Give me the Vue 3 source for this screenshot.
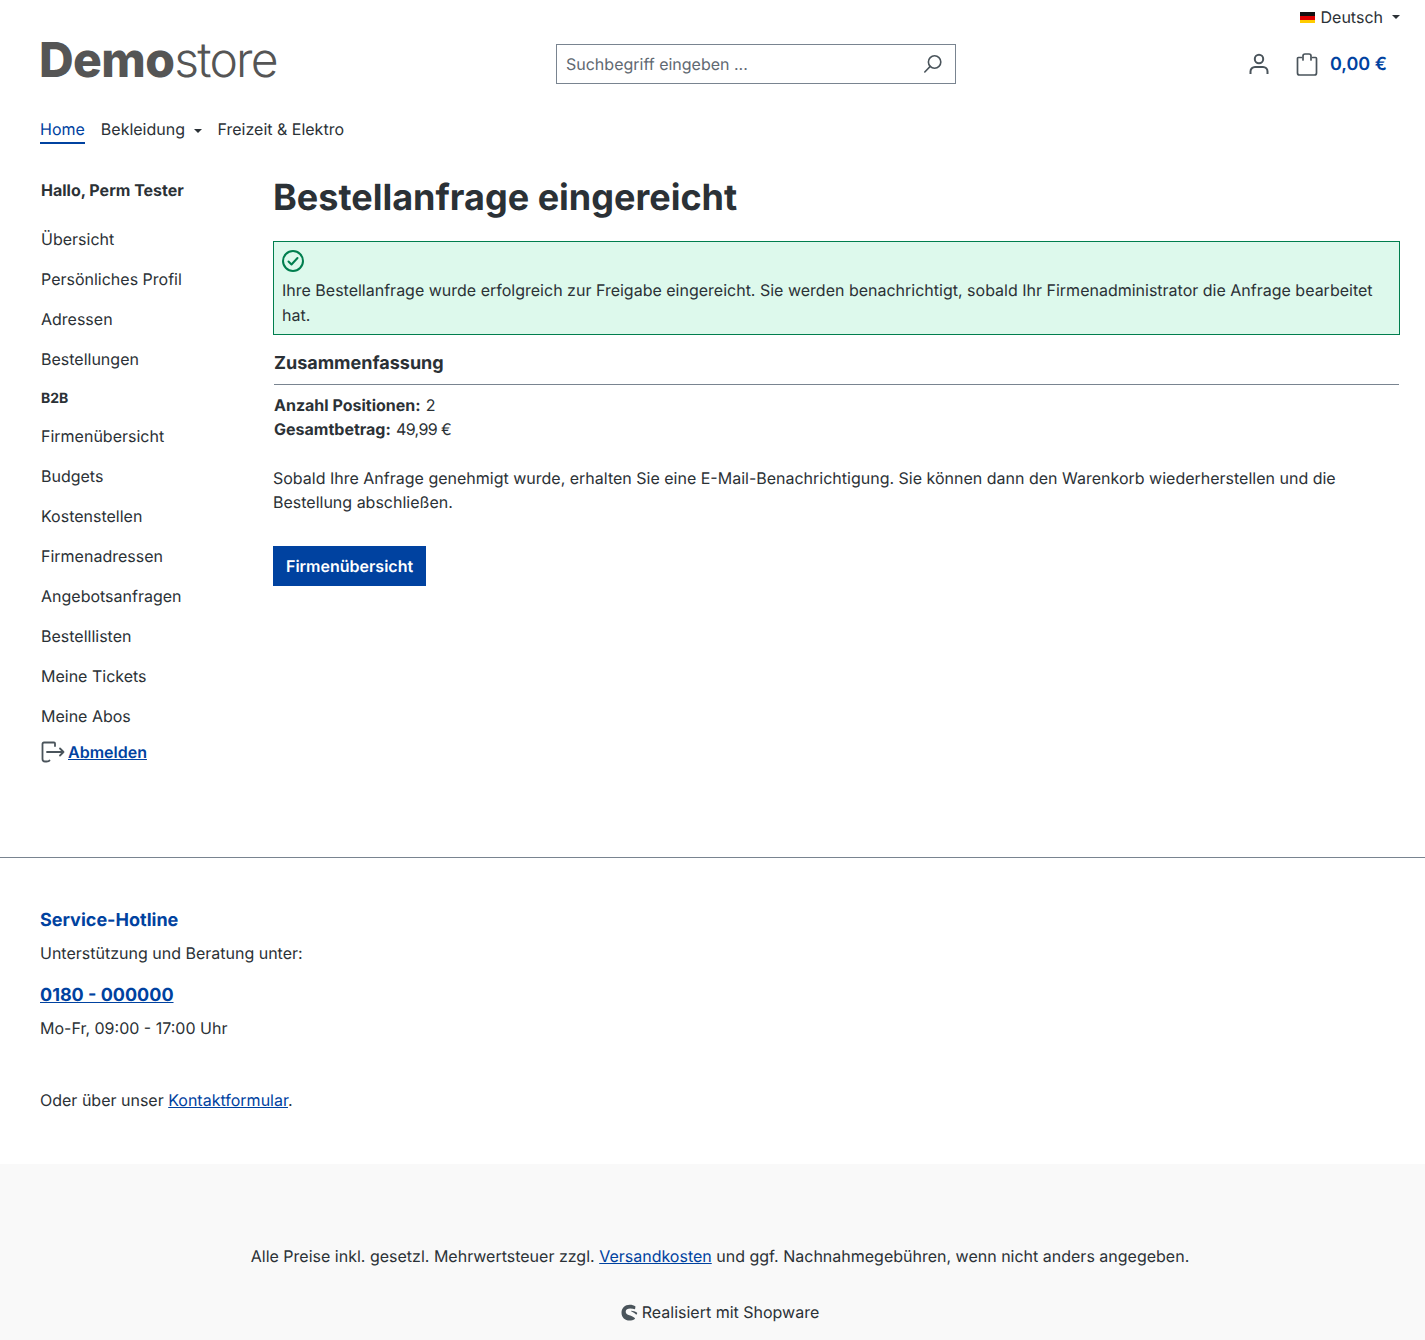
<template>
  <div class="page">
    <div class="topbar">
      <svg class="flag" width="15" height="11" viewBox="0 0 15 11">
        <rect width="15" height="4" y="0" fill="#111" />
        <rect width="15" height="4" y="4" fill="#d00" />
        <rect width="15" height="3" y="8" fill="#fc0" />
      </svg>
      <span class="lang">Deutsch</span>
      <span class="caret lang-caret"></span>
    </div>

    <header class="header">
      <div class="logo"><b>Demo</b><span>store</span></div>
      <div class="search">
        <span class="search-text">Suchbegriff eingeben ...</span>
        <svg width="20" height="20" viewBox="0 0 20 20" fill="none" stroke="#4a545b" stroke-width="1.6" stroke-linecap="round">
          <circle cx="11.6" cy="8" r="6.2" />
          <path d="M7.2 12.4 1.8 18" />
        </svg>
      </div>
      <div class="actions">
        <svg width="20" height="22" viewBox="0 0 20 22" fill="none" stroke="#4a545b" stroke-width="2">
          <circle cx="10" cy="6" r="4.2" />
          <path d="M1.5 21v-2.5A4.5 4.5 0 0 1 6 14h8a4.5 4.5 0 0 1 4.500 4.500V21" />
        </svg>
        <svg class="bag" width="22" height="23" viewBox="0 0 22 23" fill="none" stroke="#4a545b" stroke-width="1.7" stroke-linecap="round">
          <path d="M5.500 4.500H2.400Q1.500 4.500 1.500 5.500V20Q1.500 22 3.500 22H18.500Q20.500 22 20.500 20V5.500Q20.500 4.500 19.600 4.500H16.500" />
          <path d="M7 7V3Q7 1 9 1H13Q15 1 15 3V7" />
        </svg>
        <span class="cart-total">0,00 €</span>
      </div>
    </header>

    <nav class="mainnav">
      <a class="nav-link active">Home</a>
      <a class="nav-link">Bekleidung <span class="caret nav-caret"></span></a>
      <a class="nav-link">Freizeit &amp; Elektro</a>
    </nav>

    <main class="content">
      <aside class="sidebar">
        <div class="hello">Hallo, Perm Tester</div>
        <ul class="menu">
          <li v-for="item in accountLinks" :key="item">{{ item }}</li>
        </ul>
        <div class="b2b">B2B</div>
        <ul class="menu menu-b2b">
          <li v-for="item in b2bLinks" :key="item">{{ item }}</li>
        </ul>
        <div class="logout">
          <svg width="24" height="22" viewBox="0 0 24 22" fill="none" stroke="#4a545b" stroke-width="1.8" stroke-linecap="round" stroke-linejoin="round">
            <path d="M14 5V2.500Q14 1.500 13 1.500H3Q1.500 1.500 1.500 3V18Q1.500 20.500 4 20.500H5.500Q8 20.500 8.500 19.500" />
            <path d="M6 11H22.500M19 7.500 22.500 11 19 14.500" />
          </svg>
          <a>Abmelden</a>
        </div>
      </aside>

      <section class="main">
        <h1>Bestellanfrage eingereicht</h1>
        <div class="alert">
          <svg width="24" height="24" viewBox="0 0 24 24" fill="none" stroke="#007e4e" stroke-width="2" stroke-linecap="round" stroke-linejoin="round">
            <circle cx="12" cy="12" r="10" />
            <path d="m7.500 12.500 3 3 6-6.500" />
          </svg>
          <p>Ihre Bestellanfrage wurde erfolgreich zur Freigabe eingereicht. Sie werden benachrichtigt, sobald Ihr Firmenadministrator die Anfrage bearbeitet hat.</p>
        </div>
        <div class="summary">
          <h2>Zusammenfassung</h2>
          <div class="summary-row"><strong>Anzahl Positionen:</strong> 2</div>
          <div class="summary-row"><strong>Gesamtbetrag:</strong> <span class="amount">49,99 €</span></div>
        </div>
        <p class="note">Sobald Ihre Anfrage genehmigt wurde, erhalten Sie eine E-Mail-Benachrichtigung. Sie können dann den Warenkorb wiederherstellen und die Bestellung abschließen.</p>
        <a class="btn">Firmenübersicht</a>
      </section>
    </main>

    <footer>
      <div class="service">
        <div class="service-title">Service-Hotline</div>
        <p class="service-sub">Unterstützung und Beratung unter:</p>
        <a class="phone">0180 - 000000</a>
        <p class="hours">Mo-Fr, 09:00 - 17:00 Uhr</p>
        <p class="contact">Oder über unser <a>Kontaktformular</a>.</p>
      </div>
      <div class="bottom">
        <p class="vat">Alle Preise inkl. gesetzl. Mehrwertsteuer zzgl. <a>Versandkosten</a> und ggf. Nachnahmegebühren, wenn nicht anders angegeben.</p>
        <div class="powered">
          <svg width="17" height="17" viewBox="0 0 17 17">
            <path fill="#4a545b" d="M14.500 2.600C13 1.300 11 .7 8.800.7 3.900.7.500 4 .500 8.700c0 4.600 3.500 7.900 8 7.900 1.900 0 3.800-.6 5.300-1.700.3-.2.200-.6 0-.8-1.200-1.500-3.300-2.200-5.400-2.900-2.100-.7-3.700-1.500-3.700-3.500 0-2 2-3.200 4.600-3.200 1.600 0 3.200.3 4.600.8.200 0 .4-.3.200-.5zM15.800 8.400c-1.700-1-3.600-1.500-5.500-1.600-.3 0-.4.300-.2.500 1.900.9 3.700 1.800 4.900 3.200.2.200.5.200.6 0 .5-.8.700-1.300.6-1.500 0-.3-.2-.5-.4-.6z" />
          </svg>
          <span>Realisiert mit Shopware</span>
        </div>
      </div>
    </footer>
  </div>
</template>

<script setup>
const accountLinks = ['Übersicht', 'Persönliches Profil', 'Adressen', 'Bestellungen']
const b2bLinks = [
  'Firmenübersicht',
  'Budgets',
  'Kostenstellen',
  'Firmenadressen',
  'Angebotsanfragen',
  'Bestelllisten',
  'Meine Tickets',
  'Meine Abos'
]
</script>

<style>
body {
  margin: 0;
}
</style>

<style scoped>
.page {
  font-family: Inter, "Liberation Sans", sans-serif;
  font-size: 16px;
  line-height: 24px;
  color: #2b3136;
  background: #fff;
  text-rendering: geometricPrecision;
}

a {
  color: #0042a0;
  text-decoration: underline;
}

p {
  margin: 0;
}

.caret {
  display: inline-block;
  border-top: 4px solid #2b3136;
  border-left: 4px solid transparent;
  border-right: 4px solid transparent;
}

.topbar {
  display: flex;
  align-items: center;
  justify-content: flex-end;
  height: 34px;
  padding: 0 25px 0 0;
}

.flag {
  margin-right: 6px;
}

.lang-caret {
  margin-left: 9px;
}

.header {
  display: flex;
  align-items: center;
  height: 60px;
  padding: 0 38px 0 40px;
}

.logo {
  width: 516px;
  font-size: 48px;
  line-height: 54px;
  color: #555;
  letter-spacing: -0.6px;
  margin: -8px 0 0 -1px;
}

.logo b {
  font-weight: 800;
}

.logo span {
  font-weight: 300;
  letter-spacing: -1.8px;
}

.search {
  display: flex;
  align-items: center;
  justify-content: space-between;
  box-sizing: border-box;
  width: 400px;
  height: 40px;
  padding: 0 12px 0 9px;
  margin-left: 1px;
  border: 1px solid #798490;
}

.search-text {
  color: #5f6972;
}

.actions {
  display: flex;
  align-items: center;
  margin-left: auto;
}

.bag {
  margin-left: 27px;
}

.cart-total {
  margin: 1px 0 0 12px;
  font-size: 18px;
  font-weight: 600;
  color: #0042a0;
}

.mainnav {
  display: flex;
  gap: 16px;
  padding: 23px 40px 0;
  height: 27px;
}

.nav-link {
  color: #2b3136;
  text-decoration: none;
  height: 25px;
}

.nav-link.active {
  color: #0042a0;
  border-bottom: 2px solid #0042a0;
}

.nav-caret {
  margin-left: 4px;
  vertical-align: 2px;
}

.content {
  display: flex;
  padding: 28px 25px 0 41px;
  height: 685px;
  border-bottom: 1px solid #798490;
}

.sidebar {
  width: 232px;
  flex: none;
}

.hello {
  font-weight: 700;
  margin-top: 6px;
  margin-bottom: 17px;
}

.menu {
  list-style: none;
  margin: 0;
  padding: 0;
}

.menu li {
  height: 40px;
  line-height: 40px;
}

.b2b {
  font-size: 14px;
  font-weight: 700;
  line-height: 40px;
  height: 39px;
}

.menu-b2b {
  margin-top: -2px;
}

.logout {
  display: flex;
  align-items: center;
  gap: 3px;
  height: 32px;
  margin-top: 0;
  font-weight: 600;
}

.main {
  flex: 1;
  min-width: 0;
}

h1 {
  margin: 3px 0 0;
  font-size: 36px;
  line-height: 44px;
  font-weight: 700;
}

.alert {
  margin-top: 22px;
  box-sizing: border-box;
  height: 94px;
  padding: 7px 8px;
  border: 1px solid #007e4e;
  background: #ddf9ec;
}

.alert svg {
  display: block;
  margin-bottom: 5px;
  margin-left: -1px;
}

.alert p {
  line-height: 25px;
}

.summary {
  padding: 0 1px;
}

h2 {
  margin: 17px 0 8px;
  padding-bottom: 8px;
  font-size: 18px;
  line-height: 24px;
  font-weight: 700;
  border-bottom: 1px solid #798490;
}

.summary-row strong {
  font-weight: 700;
  margin-right: 0.6px;
}

.amount {
  letter-spacing: -0.6px;
}

.note {
  margin-top: 25px;
}

.btn {
  display: inline-block;
  margin-top: 32px;
  padding: 8px 13px;
  background: #0042a0;
  color: #fff;
  font-weight: 600;
  text-decoration: none;
}

.service {
  padding: 51px 40px 0;
  height: 255px;
}

.service-title {
  font-size: 18px;
  font-weight: 700;
  color: #0042a0;
}

.service-sub {
  margin-top: 8px;
}

.phone {
  display: block;
  margin-top: 19px;
  font-size: 18px;
  font-weight: 700;
}

.hours {
  margin-top: 8px;
}

.contact {
  margin-top: 48px;
}

.bottom {
  background: #f9f9f9;
  height: 176px;
  padding-top: 80px;
  box-sizing: border-box;
  text-align: center;
}

.vat {
  padding-left: 15px;
}

.powered {
  display: flex;
  justify-content: center;
  align-items: center;
  gap: 4px;
  margin-top: 32px;
  padding-left: 15px;
}
</style>
